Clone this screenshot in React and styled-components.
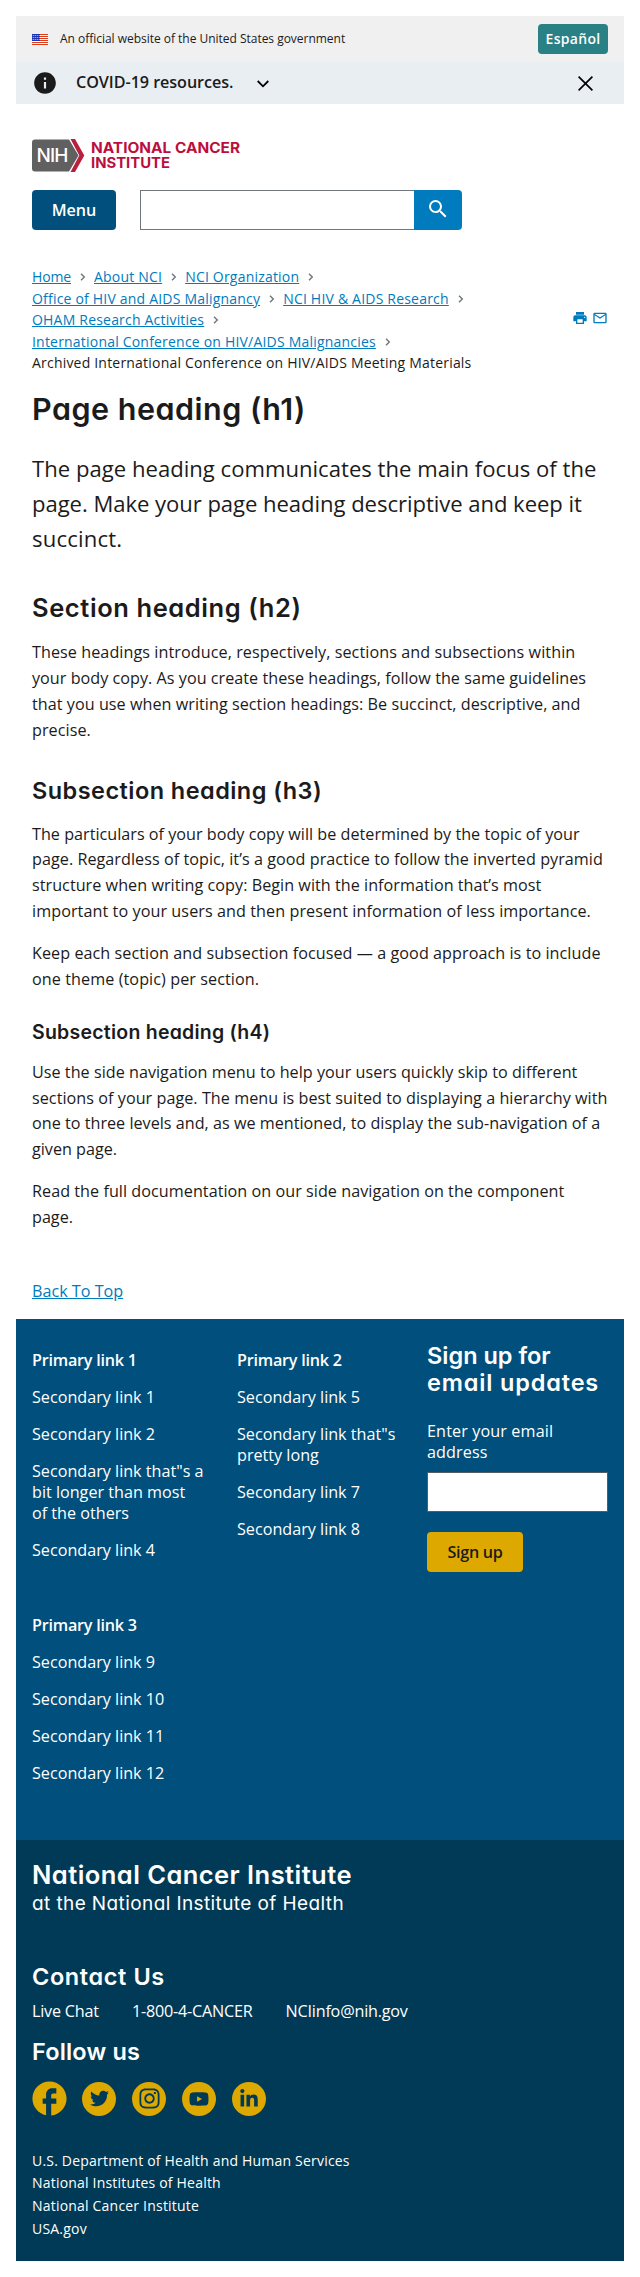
import React from "react";
import styled, { createGlobalStyle } from "styled-components";
import { MdPrint, MdMailOutline, MdInfo, MdSearch, MdFacebook } from "react-icons/md";
import { FaTwitter, FaInstagram, FaYoutube, FaLinkedinIn } from "react-icons/fa";

const display = `Inter, "Open Sans", sans-serif`;

const GlobalStyle = createGlobalStyle`
  *, *::before, *::after { box-sizing: border-box; }
  body {
    margin: 0;
    background: #fff;
    color: #1b1b1b;
    font-family: "Open Sans", "Noto Sans", sans-serif;
    font-size: 16.16px;
    line-height: 1.6;
  }
  h1, h2, h3, h4, p, ul, ol { margin: 0; padding: 0; }
  ul, ol { list-style: none; }
  svg { display: block; }
`;

const Page = styled.div`
  margin: 16px;
`;

const GovBanner = styled.div`
  display: flex;
  align-items: center;
  height: 46px;
  padding: 0 16px;
  background: #f0f0f0;
  font-size: 12px;
`;

const GovText = styled.span`
  margin-left: 12px;
  flex: 1;
  line-height: 16px;
  letter-spacing: -0.023px;
`;

const LanguageButton = styled.button`
  width: 70px;
  height: 30px;
  padding: 0;
  border: 0;
  border-radius: 4px;
  background: #298085;
  color: #fff;
  font: 600 14px/30px "Open Sans", sans-serif;
  letter-spacing: 0.3px;
`;

const Alert = styled.div`
  display: flex;
  align-items: center;
  height: 42px;
  padding: 0 31px 0 16px;
  background: #e9eef3;
  font-weight: 600;
`;

const AlertText = styled.span`
  margin-left: 18px;
  letter-spacing: -0.06px;
`;

const Chevron = styled.svg`
  margin: 2px auto 0 23.5px;
`;

const Header = styled.header`
  padding: 35px 16px 0;
`;

const Toolbar = styled.div`
  display: flex;
  margin-top: 18px;
`;

const Button = styled.button`
  width: ${(p) => p.$width}px;
  height: 40px;
  padding: 0;
  border: 0;
  border-radius: 4px;
  background: ${(p) => p.$bg};
  color: ${(p) => p.$color || "#fff"};
  font: 600 16.16px/40px "Open Sans", sans-serif;
  letter-spacing: ${(p) => p.$track || 0}px;
`;

const SearchForm = styled.div`
  display: flex;
  margin-left: 24px;
`;

const SearchInput = styled.input`
  width: 274px;
  height: 40px;
  border: 1px solid #71767a;
  border-right: 0;
  border-radius: 0;
  background: #fff;
`;

const SearchButton = styled.button`
  display: flex;
  width: 48px;
  height: 40px;
  align-items: flex-start;
  justify-content: center;
  padding: 7px 0 0;
  border: 0;
  border-radius: 0 4px 4px 0;
  background: #007bbd;
  color: #fff;
`;

const CrumbBar = styled.div`
  display: flex;
  align-items: center;
  justify-content: space-between;
  padding: 36.3px 16px 0;
`;

const Crumbs = styled.ol`
  width: 470px;
  font-size: 14px;
  line-height: 21.5px;
`;

const CrumbRow = styled.li`
  display: flex;
  letter-spacing: 0.2px;
  white-space: nowrap;
`;

const Link = styled.a`
  color: #007bbd;
  text-decoration: underline;
  letter-spacing: ${(p) => (p.$tight ? "-0.14px" : "inherit")};
`;

const CrumbArrow = styled.svg`
  margin: 7px 8px 0 9px;
`;

const PageOptions = styled.div`
  display: flex;
  gap: 4px;
  margin-top: -5px;
  color: #007bbd;
`;

const Main = styled.main`
  padding: 14px 16px 0;
`;

const Heading = styled.h2`
  font-family: ${display};
  font-feature-settings: "cv11" 1;
  font-weight: ${(p) => p.$weight || 600};
  font-size: ${(p) => p.$size}px;
  line-height: ${(p) => p.$line}px;
  letter-spacing: ${(p) => p.$track || 0}px;
  margin-top: ${(p) => p.$top || 0}px;
`;

const Lead = styled.p`
  margin-top: 21px;
  font-size: 22.08px;
`;

const Paragraph = styled.p`
  margin-top: ${(p) => p.$top || 16}px;
`;

const Line = styled.span`
  display: block;
  white-space: nowrap;
  letter-spacing: ${(p) => p.$track || 0}px;
`;

const BackToTop = styled.div`
  padding: 48px 0 14.2px;
`;

const PrimaryFooter = styled.div`
  display: flex;
  height: 521px;
  padding: 23px 16px 0;
  background: #004f7c;
  color: #fff;
`;

const LinkGroups = styled.div`
  display: grid;
  grid-template-columns: 205px 162px;
  grid-template-rows: 265px auto;
  width: 395px;
  padding-top: 7.8px;
  line-height: 21px;
`;

const LinkGroup = styled.ul`
  display: flex;
  flex-direction: column;
  gap: 16px;
`;

const GroupItem = styled.li`
  max-width: 173px;
  font-weight: ${(p) => (p.$primary ? 600 : 400)};
  letter-spacing: ${(p) => (p.$primary ? -0.23 : 0)}px;
  white-space: pre-line;
`;

const SignUp = styled.div`
  width: 181px;
`;

const Label = styled.label`
  display: block;
  margin: 25px 0 8.4px;
  line-height: 21px;
  letter-spacing: 0.12px;
`;

const EmailInput = styled.input`
  display: block;
  width: 181px;
  height: 40px;
  margin-bottom: 20px;
  border: 1px solid #565c65;
  border-radius: 0;
  background: #fff;
`;

const SecondaryFooter = styled.div`
  height: 421px;
  padding: 18px 16px 0;
  background: #003a56;
  color: #fff;
`;

const ContactList = styled.ul`
  display: flex;
  gap: 33px;
  margin-top: 7px;
  letter-spacing: -0.2px;
`;

const SocialList = styled.ul`
  display: flex;
  gap: 16px;
  margin-top: 15px;
`;

const SocialBadge = styled.li`
  display: flex;
  align-items: center;
  justify-content: center;
  width: 34px;
  height: 34px;
  border-radius: 50%;
  background: ${(p) => (p.$bare ? "none" : "#dda901")};
  color: ${(p) => (p.$bare ? "#dda901" : "#003a56")};
  svg { flex: none; }
`;

const AgencyLinks = styled.ul`
  margin-top: 34px;
  font-size: 14px;
  line-height: 22.7px;
  letter-spacing: 0.2px;
`;

function Flag() {
  return (
    <svg width="16" height="11" viewBox="0 0 16 11">
      <rect width="16" height="11" fill="#fff" />
      {[0, 2, 4, 6, 8, 10].map((y) => (
        <rect key={y} y={y} width="16" height="1" fill="#db3e1f" />
      ))}
      <rect width="8" height="7" fill="#1e33b1" />
      {[1.5, 3.5, 5.5].map((y) =>
        [1.2, 3.2, 5.2, 7.2].map((x) => <circle key={`${x}-${y}`} cx={x} cy={y} r="0.5" fill="#fff" />)
      )}
    </svg>
  );
}

function Logo() {
  return (
    <svg width="210" height="33" viewBox="0 0 210 33">
      <path d="M3 .5H37L46.500 16.500 37 32.500H3Q0 32.500 0 29.500V3.500Q0 .5 3 .5Z" fill="#606060" />
      <path d="M38.500 0H43L52.300 16.500 43 33H38.500L47.300 16.500Z" fill="#bb1f40" />
      <g fontFamily="Inter, sans-serif">
        <text x="4.500" y="23" fontSize="19" fontWeight="500" fill="#fff" textLength="32">NIH</text>
        <g fontWeight="700" fontSize="14" fill="#bb0e3d">
          <text x="59" y="13.600" textLength="149" lengthAdjust="spacingAndGlyphs">NATIONAL CANCER</text>
          <text x="59" y="29.100" textLength="79" lengthAdjust="spacingAndGlyphs">INSTITUTE</text>
        </g>
      </g>
    </svg>
  );
}

function Arrow() {
  return (
    <CrumbArrow width="6" height="8" viewBox="0 0 6 8" fill="none" stroke="#71767a" strokeWidth="1.4">
      <path d="M1 .7 4.300 4 1 7.300" />
    </CrumbArrow>
  );
}

const crumbs = [
  ["Home", "About NCI", "NCI Organization"],
  ["Office of HIV and AIDS Malignancy", "NCI HIV & AIDS Research"],
  ["OHAM Research Activities"],
  ["International Conference on HIV/AIDS Malignancies"],
];

const groups = [
  ["Primary link 1", "Secondary link 1", "Secondary link 2", 'Secondary link that"s a bit longer than most\nof the others', "Secondary link 4"],
  ["Primary link 2", "Secondary link 5", 'Secondary link that"s pretty long', "Secondary link 7", "Secondary link 8"],
  ["Primary link 3", "Secondary link 9", "Secondary link 10", "Secondary link 11", "Secondary link 12"],
];

export default function App() {
  return (
    <Page>
      <GlobalStyle />
      <GovBanner>
        <Flag />
        <GovText>An official website of the United States government</GovText>
        <LanguageButton>Español</LanguageButton>
      </GovBanner>
      <Alert>
        <MdInfo size={26} />
        <AlertText>COVID-19 resources.</AlertText>
        <Chevron width="12" height="8" viewBox="0 0 12 8" fill="none" stroke="#000" strokeWidth="1.8">
          <path d="M.7 1 6 6.300 11.300 1" />
        </Chevron>
        <svg width="15" height="15" viewBox="0 0 15 15" stroke="#000" strokeWidth="1.7">
          <path d="M.6 .6 14.400 14.400M14.400 .6 .6 14.400" />
        </svg>
      </Alert>
      <Header>
        <Logo />
        <Toolbar>
          <Button $width={84} $bg="#004f7c" $track={-0.05}>Menu</Button>
          <SearchForm>
            <SearchInput />
            <SearchButton><MdSearch size={24} /></SearchButton>
          </SearchForm>
        </Toolbar>
      </Header>
      <CrumbBar>
        <Crumbs>
          {crumbs.map((row) => (
            <CrumbRow key={row[0]}>
              {row.map((name) => (
                <React.Fragment key={name}>
                  <Link $tight={name === "Home"}>{name}</Link>
                  <Arrow />
                </React.Fragment>
              ))}
            </CrumbRow>
          ))}
          <CrumbRow>Archived International Conference on HIV/AIDS Meeting Materials</CrumbRow>
        </Crumbs>
        <PageOptions>
          <MdPrint size={16} />
          <MdMailOutline size={16} />
        </PageOptions>
      </CrumbBar>
      <Main>
        <Heading as="h1" $size={30.5} $line={42} $track={0.5}>Page heading (h1)</Heading>
        <Lead>
          <Line $track={0.019}>The page heading communicates the main focus of the</Line>{" "}
          <Line $track={-0.051}>page. Make your page heading descriptive and keep it</Line>{" "}
          <Line $track={0.2}>succinct.</Line>
        </Lead>
        <Heading $size={25.5} $line={34} $top={34.4} $track={0.59}>Section heading (h2)</Heading>
        <Paragraph $top={15}>
          <Line $track={0.068}>These headings introduce, respectively, sections and subsections within</Line>{" "}
          <Line $track={0.026}>your body copy. As you create these headings, follow the same guidelines</Line>{" "}
          <Line $track={0.04}>that you use when writing section headings: Be succinct, descriptive, and</Line>{" "}
          <Line $track={0.06}>precise.</Line>
        </Paragraph>
        <Heading as="h3" $size={23.5} $line={30} $top={32.8} $track={0.45}>Subsection heading (h3)</Heading>
        <Paragraph $top={15.3}>
          <Line $track={0.014}>The particulars of your body copy will be determined by the topic of your</Line>{" "}
          <Line $track={0.043}>page. Regardless of topic, it’s a good practice to follow the inverted pyramid</Line>{" "}
          <Line $track={0.035}>structure when writing copy: Begin with the information that’s most</Line>{" "}
          <Line $track={0.074}>important to your users and then present information of less importance.</Line>
        </Paragraph>
        <Paragraph>
          <Line $track={0.056}>Keep each section and subsection focused — a good approach is to include</Line>{" "}
          <Line $track={0.079}>one theme (topic) per section.</Line>
        </Paragraph>
        <Heading as="h4" $size={19.5} $line={26} $top={26.5} $track={0.24}>Subsection heading (h4)</Heading>
        <Paragraph $top={14.6}>
          <Line $track={0.028}>Use the side navigation menu to help your users quickly skip to different</Line>{" "}
          <Line $track={0.043}>sections of your page. The menu is best suited to displaying a hierarchy with</Line>{" "}
          <Line $track={0.016}>one to three levels and, as we mentioned, to display the sub-navigation of a</Line>{" "}
          <Line>given page.</Line>
        </Paragraph>
        <Paragraph>
          <Line $track={0.043}>Read the full documentation on our side navigation on the component</Line>{" "}
          <Line>page.</Line>
        </Paragraph>
        <BackToTop><Link>Back To Top</Link></BackToTop>
      </Main>
      <footer>
        <PrimaryFooter>
          <LinkGroups>
            {groups.map((items) => (
              <LinkGroup key={items[0]}>
                {items.map((item, i) => (
                  <GroupItem key={item} $primary={i === 0}>{item}</GroupItem>
                ))}
              </LinkGroup>
            ))}
          </LinkGroups>
          <SignUp>
            <Heading as="h3" $size={23.5} $line={27.3}>
              <Line>Sign up for</Line>{" "}
              <Line $track={0.84}>email updates</Line>
            </Heading>
            <Label>Enter your email address</Label>
            <EmailInput />
            <Button $width={96} $bg="#dda901" $color="#1b1b1b" $track={-0.3}>Sign up</Button>
          </SignUp>
        </PrimaryFooter>
        <SecondaryFooter>
          <Heading $size={25.5} $line={34} $track={0.45}>National Cancer Institute</Heading>
          <Heading as="p" $weight={400} $size={19} $line={26} $top={-1} $track={0.4}>at the National Institute of Health</Heading>
          <Heading as="h3" $size={23.5} $line={30} $top={45} $track={0.6}>Contact Us</Heading>
          <ContactList>
            <li>Live Chat</li>
            <li>1-800-4-CANCER</li>
            <li>NCIinfo@nih.gov</li>
          </ContactList>
          <Heading as="h3" $size={23.5} $line={30} $top={12} $track={0.16}>Follow us</Heading>
          <SocialList>
            <SocialBadge $bare><MdFacebook size={41} /></SocialBadge>
            <SocialBadge><FaTwitter size={19} /></SocialBadge>
            <SocialBadge><FaInstagram size={23} /></SocialBadge>
            <SocialBadge><FaYoutube size={20} /></SocialBadge>
            <SocialBadge><FaLinkedinIn size={20} /></SocialBadge>
          </SocialList>
          <AgencyLinks>
            <li>U.S. Department of Health and Human Services</li>
            <li>National Institutes of Health</li>
            <li>National Cancer Institute</li>
            <li>USA.gov</li>
          </AgencyLinks>
        </SecondaryFooter>
      </footer>
    </Page>
  );
}
